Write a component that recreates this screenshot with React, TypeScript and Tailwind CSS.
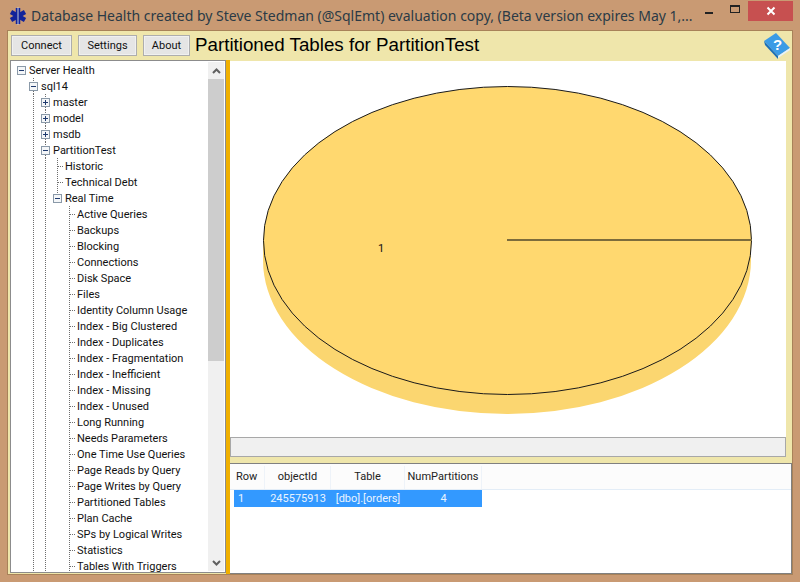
const FONT = "font-['Roboto','Liberation_Sans',Arial,sans-serif]";

type Cell = "blank" | "line" | "tee" | "plus" | "minus" | "minusRoot" | "minusLast";

interface TreeRow {
  label: string;
  cells: Cell[];
}

const LEAVES = [
  "Active Queries",
  "Backups",
  "Blocking",
  "Connections",
  "Disk Space",
  "Files",
  "Identity Column Usage",
  "Index - Big Clustered",
  "Index - Duplicates",
  "Index - Fragmentation",
  "Index - Inefficient",
  "Index - Missing",
  "Index - Unused",
  "Long Running",
  "Needs Parameters",
  "One Time Use Queries",
  "Page Reads by Query",
  "Page Writes by Query",
  "Partitioned Tables",
  "Plan Cache",
  "SPs by Logical Writes",
  "Statistics",
  "Tables With Triggers",
];

const ROWS: TreeRow[] = [
  { label: "Server Health", cells: ["minusRoot"] },
  { label: "sql14", cells: ["blank", "minus"] },
  { label: "master", cells: ["blank", "line", "plus"] },
  { label: "model", cells: ["blank", "line", "plus"] },
  { label: "msdb", cells: ["blank", "line", "plus"] },
  { label: "PartitionTest", cells: ["blank", "line", "minus"] },
  { label: "Historic", cells: ["blank", "line", "line", "tee"] },
  { label: "Technical Debt", cells: ["blank", "line", "line", "tee"] },
  { label: "Real Time", cells: ["blank", "line", "line", "minusLast"] },
  ...LEAVES.map((label) => ({
    label,
    cells: ["blank", "line", "line", "blank", "tee"] as Cell[],
  })),
];

function TreeCell({ kind }: { kind: Cell }) {
  const boxed = kind !== "blank" && kind !== "line" && kind !== "tee";
  return (
    <svg width="12" height="16" className="shrink-0" shapeRendering="crispEdges">
      {(kind === "line" || kind === "tee") && (
        <line x1="6.5" y1="0" x2="6.5" y2="16" stroke="#6e6e6e" strokeDasharray="1 1" />
      )}
      {kind === "tee" && (
        <line x1="7" y1="8.5" x2="12" y2="8.5" stroke="#6e6e6e" strokeDasharray="1 1" />
      )}
      {boxed && (
        <>
          {kind !== "minusRoot" && (
            <line x1="6.5" y1="0" x2="6.5" y2="4" stroke="#6e6e6e" strokeDasharray="1 1" />
          )}
          {(kind === "plus" || kind === "minus") && (
            <line x1="6.5" y1="13" x2="6.5" y2="16" stroke="#6e6e6e" strokeDasharray="1 1" />
          )}
          <rect x="2.5" y="4.5" width="8" height="8" fill="#f4f6f8" stroke="#8a99a8" />
          <line x1="4" y1="8.5" x2="9" y2="8.5" stroke="#1f3a6e" />
          {kind === "plus" && <line x1="6.5" y1="6" x2="6.5" y2="11" stroke="#1f3a6e" />}
        </>
      )}
    </svg>
  );
}

function Tree() {
  return (
    <div className="flex-1 min-w-0 overflow-hidden pt-px pl-1">
      {ROWS.map((row) => (
        <div key={row.label} className="flex items-center h-4">
          {row.cells.map((cell, i) => (
            <TreeCell key={i} kind={cell} />
          ))}
          <span className="ml-0.5 mt-0.5 text-[11px] leading-4 text-[#111] whitespace-nowrap">
            {row.label}
          </span>
        </div>
      ))}
    </div>
  );
}

function Chevron({ up }: { up?: boolean }) {
  return (
    <svg width="9" height="6" viewBox="0 0 9 6">
      <path
        d={up ? "M1 5 L4.5 1.5 L8 5" : "M1 1 L4.5 4.5 L8 1"}
        fill="none"
        stroke="#606060"
        strokeWidth="2"
      />
    </svg>
  );
}

function TreeScrollbar() {
  return (
    <div className="w-4 shrink-0 flex flex-col bg-[#f0f0f0] mt-px mb-px">
      <div className="h-[17px] flex items-center justify-center">
        <Chevron up />
      </div>
      <div className="h-[282px] bg-[#cdcdcd]" />
      <div className="flex-1" />
      <div className="h-[17px] flex items-center justify-center">
        <Chevron />
      </div>
    </div>
  );
}

function ToolButton({ label, width }: { label: string; width: string }) {
  return (
    <button
      className={`${width} h-[21px] pt-px border border-[#adadad] bg-[#e5e5e5] text-[11px] text-[#111] flex items-center justify-center shadow-[inset_0_0_0_1px_#f0f0f0]`}
    >
      {label}
    </button>
  );
}

function PieChart() {
  return (
    <svg width="556" height="376" className="block">
      <path d="M33 179 V199 A244 154 0 0 0 521 199 V179 Z" fill="#fbd670" />
      <ellipse cx="277.5" cy="179.5" rx="244" ry="154" fill="#ffd86f" stroke="#1a1a1a" />
      <line x1="277" y1="179" x2="522" y2="179" stroke="#7c6c3c" strokeWidth="2" />
      <text x="148" y="191" fontSize="11" fill="#111" fontFamily="Roboto">
        1
      </text>
    </svg>
  );
}

function StarOfLife() {
  return (
    <svg width="20" height="18" viewBox="0 0 20 18" className="shrink-0">
      <g stroke="#12239a" strokeWidth="4.5">
        <line x1="10" y1="1" x2="10" y2="17" />
        <line x1="3" y1="5" x2="17" y2="13" />
        <line x1="3" y1="13" x2="17" y2="5" />
      </g>
      <line x1="10" y1="0" x2="10" y2="18" stroke="#c4ccd8" strokeWidth="1" />
    </svg>
  );
}

function HelpBook() {
  return (
    <svg width="28" height="27" viewBox="0 0 28 27" className="block">
      <path d="M1 9 L13 1 L27 16 L15 24 Z" fill="#3b9be6" />
      <path d="M1 9 L15 24 L15 27 L2 13 Z" fill="#1b6fb8" />
      <path d="M15 24 L27 16 L27 18 L15 26 Z" fill="#e6f1fa" />
      <text
        x="10"
        y="18"
        fontSize="15"
        fontWeight="700"
        fill="#fff"
        fontFamily="Liberation Sans"
      >
        ?
      </text>
    </svg>
  );
}

function DataGrid() {
  return (
    <div className="flex-1 bg-white border-r border-b border-t border-[#808080] overflow-hidden">
      <div className="flex h-[26px] pt-0.5 bg-[#fcfcfc] border-b border-[#e3edf7] pl-1 text-[11px] text-[#222]">
        <div className="w-[31px] flex items-center border-r border-[#eef3f9] pl-0.5">Row</div>
        <div className="w-[66px] flex items-center justify-center border-r border-[#eef3f9]">
          objectId
        </div>
        <div className="w-[74px] flex items-center justify-center border-r border-[#eef3f9]">
          Table
        </div>
        <div className="w-[77px] flex items-center justify-center border-r border-[#eef3f9]">
          NumPartitions
        </div>
      </div>
      <div className="ml-1 flex h-[17px] pt-px w-[248px] bg-[#3399ff] text-[11px] text-[#eaf4ff] items-center">
        <div className="w-[31px] pl-1">1</div>
        <div className="w-[66px] text-center">245575913</div>
        <div className="w-[74px] text-center whitespace-nowrap">[dbo].[orders]</div>
        <div className="w-[77px] text-center">4</div>
      </div>
    </div>
  );
}

export default function App() {
  return (
    <div className={`${FONT} w-[800px] h-[582px] overflow-hidden bg-[#c99a73] flex flex-col`}>
      {/* title bar */}
      <div className="h-[30px] shrink-0 flex items-start pl-2">
        <div className="pt-1.5 flex items-center">
          <StarOfLife />
          <span className="ml-[3px] font-['Noto_Sans',sans-serif] text-[14px] leading-5 text-[#2b3a46] whitespace-nowrap">
            Database Health created by Steve Stedman (@SqlEmt) evaluation copy, (Beta version expires May 1,...
          </span>
        </div>
        <div className="ml-auto flex items-start pr-[7px] pt-px">
          <div className="w-[26px] h-5 flex items-center justify-center">
            <div className="w-2 h-0.5 bg-[#222] mt-1" />
          </div>
          <div className="w-[26px] h-5 flex items-center justify-center">
            <div className="w-2.5 h-2 border border-t-2 border-[#222] -mt-[5px]" />
          </div>
          <div className="w-[45px] h-5 bg-[#c75050] flex items-center justify-center">
            <svg width="10" height="10" viewBox="0 0 10 10">
              <path d="M1.5 1.5 L8.5 8.5 M8.5 1.5 L1.5 8.5" stroke="#fff" strokeWidth="2" />
            </svg>
          </div>
        </div>
      </div>

      {/* client area */}
      <div className="mx-[7px] h-[545px] border border-[#a88259] bg-[#efe6ab] flex flex-col">
        <div className="h-[29px] shrink-0 flex items-center pl-[3px]">
          <div className="flex gap-1.5">
            <ToolButton label="Connect" width="w-[61px]" />
            <ToolButton label="Settings" width="w-[59px]" />
            <ToolButton label="About" width="w-[47px]" />
          </div>
          <h1 className="ml-[5px] font-['Liberation_Sans',Arial,sans-serif] text-[18.75px] leading-none text-black">
            Partitioned Tables for PartitionTest
          </h1>
          <div className="ml-auto pr-px">
            <HelpBook />
          </div>
        </div>
        <div className="flex-1 flex min-h-0">
          <div className="ml-0.5 w-[216px] flex bg-white border border-[#8c8c8c] mb-px">
            <Tree />
            <TreeScrollbar />
            <div className="w-px" />
          </div>
          <div className="w-1 bg-[#f0b000] shrink-0" />
          <div className="flex-1 flex flex-col min-w-0">
            <div className="mr-1.5 pt-px">
              <div className="bg-white h-[376px] overflow-hidden">
                <PieChart />
              </div>
              <div className="h-5 bg-[#f0f0f0] border border-[#a8a8a8]" />
            </div>
            <div className="h-[6px] shrink-0" />
            <DataGrid />
          </div>
        </div>
      </div>
    </div>
  );
}
